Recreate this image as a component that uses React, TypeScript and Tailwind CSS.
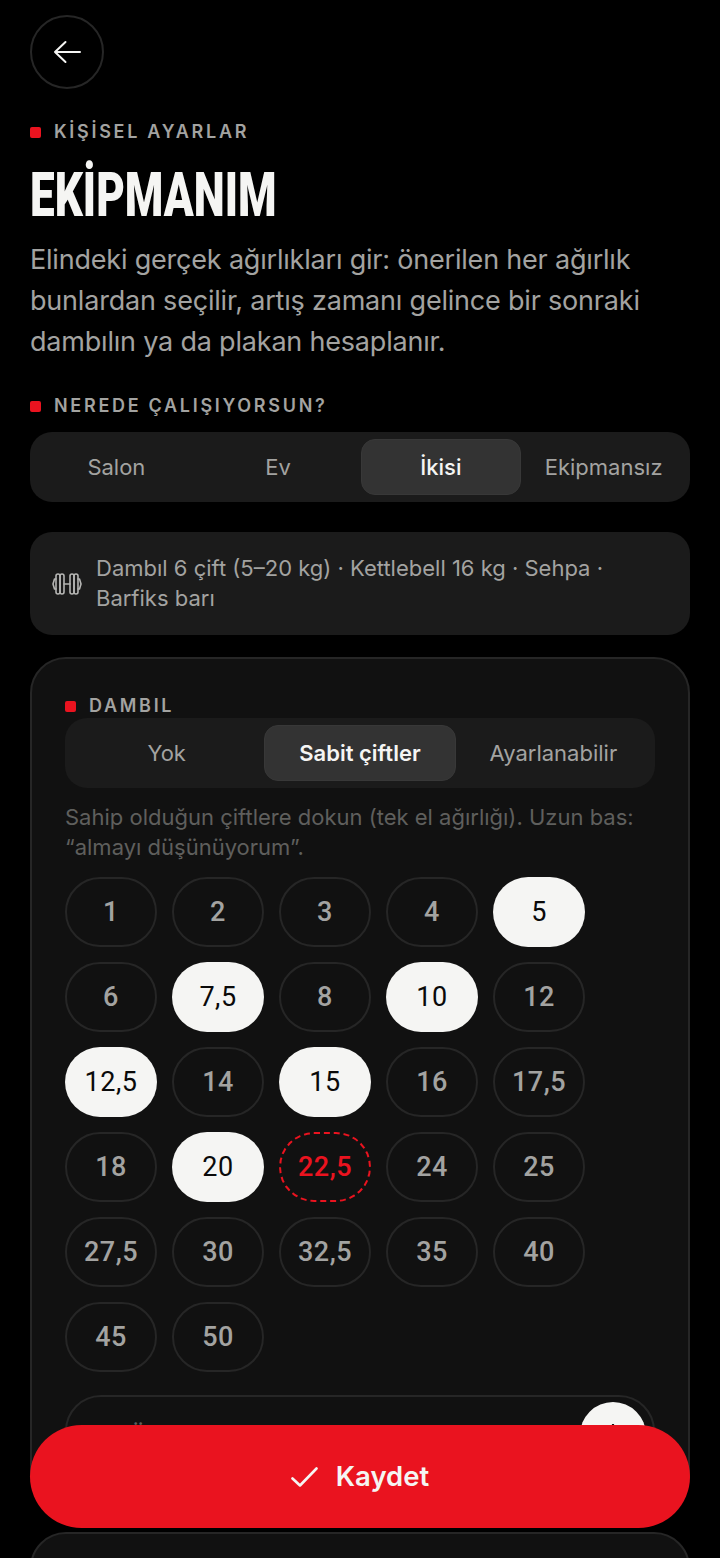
const sans = "font-['Inter','Noto_Sans',sans-serif]";
const nums = "font-['Roboto','Liberation_Sans',sans-serif]";

type S = "off" | "on" | "wish";
const rows: [string, S][][] = [
  [["1", "off"], ["2", "off"], ["3", "off"], ["4", "off"], ["5", "on"]],
  [["6", "off"], ["7,5", "on"], ["8", "off"], ["10", "on"], ["12", "off"]],
  [["12,5", "on"], ["14", "off"], ["15", "on"], ["16", "off"], ["17,5", "off"]],
  [["18", "off"], ["20", "on"], ["22,5", "wish"], ["24", "off"], ["25", "off"]],
  [["27,5", "off"], ["30", "off"], ["32,5", "off"], ["35", "off"], ["40", "off"]],
  [["45", "off"], ["50", "off"]],
];

function Label({ children }: { children: string }) {
  return (
    <div className="flex items-center gap-[13px] h-[20px]">
      <span className="w-[11px] h-[11px] rounded-[2px] bg-[#ea131f]" />
      <span className="text-[18px] font-semibold tracking-[2.7px] text-[#a3a3a1] leading-[20px]">{children}</span>
    </div>
  );
}

function Dumbbell() {
  return (
    <svg width="30" height="22" viewBox="0 0 30 22" fill="none" stroke="#b5b5b3" strokeWidth="1.6" strokeLinejoin="round" strokeLinecap="round">
      <rect x="4" y="1" width="4" height="20" rx="2" />
      <rect x="8" y="1" width="4" height="20" rx="2" />
      <rect x="18" y="1" width="4" height="20" rx="2" />
      <rect x="22" y="1" width="4" height="20" rx="2" />
      <path d="M12 11h6M4 6H2.500L1 11l1.500 5H4M26 6h1.500L29 11l-1.500 5H26" />
    </svg>
  );
}

export default function App() {
  return (
    <div className={`relative w-[720px] h-[1558px] overflow-hidden bg-black ${sans}`}>
      <div className="flex flex-col px-[30px] pt-[15px]">
        <button className="flex items-center justify-center w-[74px] h-[74px] rounded-full border-2 border-[#262626] text-[#f5f5f3]">
          <svg width="28" height="24" viewBox="0 0 28 24" fill="none" stroke="currentColor" strokeWidth="2" strokeLinecap="round" strokeLinejoin="round">
            <path d="M27 12H2M12.500 2 2 12l10.500 10" />
          </svg>
        </button>
        <div className="mt-[33px]">
          <Label>KİŞİSEL AYARLAR</Label>
        </div>
        <h1 className="mt-[18px] h-[70px] origin-left scale-x-[0.722] whitespace-nowrap text-[61px] leading-[70px] font-black text-[#f5f5f3] font-['Roboto',sans-serif]">EKİPMANIM</h1>
        <p className="mt-[9px] text-[27px] leading-[41px] text-[#a3a3a1] tracking-[-0.2px]">
          Elindeki gerçek ağırlıkları gir: önerilen her ağırlık<br />
          bunlardan seçilir, artış zamanı gelince bir sonraki<br />
          dambılın ya da plakan hesaplanır.
        </p>
        <div className="mt-[34px]">
          <Label>NEREDE ÇALIŞIYORSUN?</Label>
        </div>
        <div className="mt-[16px] flex gap-[3px] h-[70px] rounded-[22px] bg-[#1b1b1b] p-[7px] text-[22px] text-[#a3a3a1]">
          <div className="flex-1 flex items-center justify-center">Salon</div>
          <div className="flex-1 flex items-center justify-center">Ev</div>
          <div className="flex-1 flex items-center justify-center rounded-[14px] bg-[#333333] border border-[#383838] text-[#f5f5f3] font-medium">İkisi</div>
          <div className="flex-1 flex items-center justify-center">Ekipmansız</div>
        </div>
        <div className="mt-[30px] flex items-center gap-[14px] h-[103px] rounded-[22px] bg-[#1b1b1b] pl-[22px] pr-[22px] text-[22px] leading-[30px] text-[#a3a3a1]">
          <Dumbbell />
          <div className="-mt-[2px]">
            Dambıl 6 çift (5–20 kg) · Kettlebell 16 kg · Sehpa ·<br />
            Barfiks barı
          </div>
        </div>
        <div className="mt-[22px] h-[853px] shrink-0 rounded-[36px] border-2 border-[#262626] bg-[#111111] px-[33px] pt-[37px]">
          <Label>DAMBIL</Label>
          <div className="mt-[2px] flex gap-[3px] h-[70px] rounded-[22px] bg-[#1b1b1b] p-[7px] text-[22px] text-[#a3a3a1]">
            <div className="flex-1 flex items-center justify-center">Yok</div>
            <div className="flex-1 flex items-center justify-center rounded-[14px] bg-[#333333] border border-[#383838] text-[#f5f5f3] font-semibold">Sabit çiftler</div>
            <div className="flex-1 flex items-center justify-center">Ayarlanabilir</div>
          </div>
          <p className="mt-[14px] text-[22px] leading-[30px] text-[#5f5f5d]">
            Sahip olduğun çiftlere dokun (tek el ağırlığı). Uzun bas:<br />
            “almayı düşünüyorum”.
          </p>
          <div className={`mt-[15px] flex flex-col gap-[15px] ${nums}`}>
            {rows.map((r, i) => (
              <div key={i} className="flex gap-[15px]">
                {r.map(([t, s]) => (
                  <div
                    key={t}
                    className={
                      s === "on"
                        ? "flex items-center justify-center w-[92px] h-[70px] rounded-[35px] bg-[#f5f5f3] text-[#0a0a0a] text-[27px] font-normal tracking-[0.5px]"
                        : s === "wish"
                          ? "flex items-center justify-center w-[92px] h-[70px] rounded-[35px] border-2 border-dashed border-[#ea131f] text-[#ea131f] text-[27px] font-medium tracking-[0.5px]"
                          : "flex items-center justify-center w-[92px] h-[70px] rounded-[35px] border-2 border-[#262626] text-[#a3a3a1] text-[27px] font-medium tracking-[0.5px]"
                    }
                  >
                    {t}
                  </div>
                ))}
              </div>
            ))}
          </div>
          <div className="mt-[23px] flex items-center h-[80px] rounded-[36px] border-2 border-[#262626] pl-[62px] pr-[7px]">
            <span className="mt-[4px] flex-1 text-[24px] text-[#5f5f5d]">Özel ağırlık (kg)</span>
            <span className="flex items-center justify-center w-[66px] h-[66px] rounded-full bg-[#f5f5f3] text-[#0a0a0a]">
              <svg width="22" height="22" viewBox="0 0 22 22" fill="none" stroke="currentColor" strokeWidth="2.4" strokeLinecap="round">
                <path d="M11 1v20M1 11h20" />
              </svg>
            </span>
          </div>
        </div>
        <div className="mt-[22px] h-[60px] shrink-0 rounded-t-[36px] border-2 border-[#262626] bg-[#111111]" />
      </div>
      <button className="absolute left-[30px] top-[1425px] w-[660px] h-[103px] rounded-[52px] bg-[#ea131f] flex items-center justify-center gap-[18px] text-[#f5f5f3] text-[27.5px] font-semibold">
        <svg width="27" height="20" viewBox="0 0 27 20" fill="none" stroke="currentColor" strokeWidth="2.600" strokeLinecap="round" strokeLinejoin="round">
          <path d="M1.500 11.500 9 18.500 25.500 1.500" />
        </svg>
        Kaydet
      </button>
    </div>
  );
}
